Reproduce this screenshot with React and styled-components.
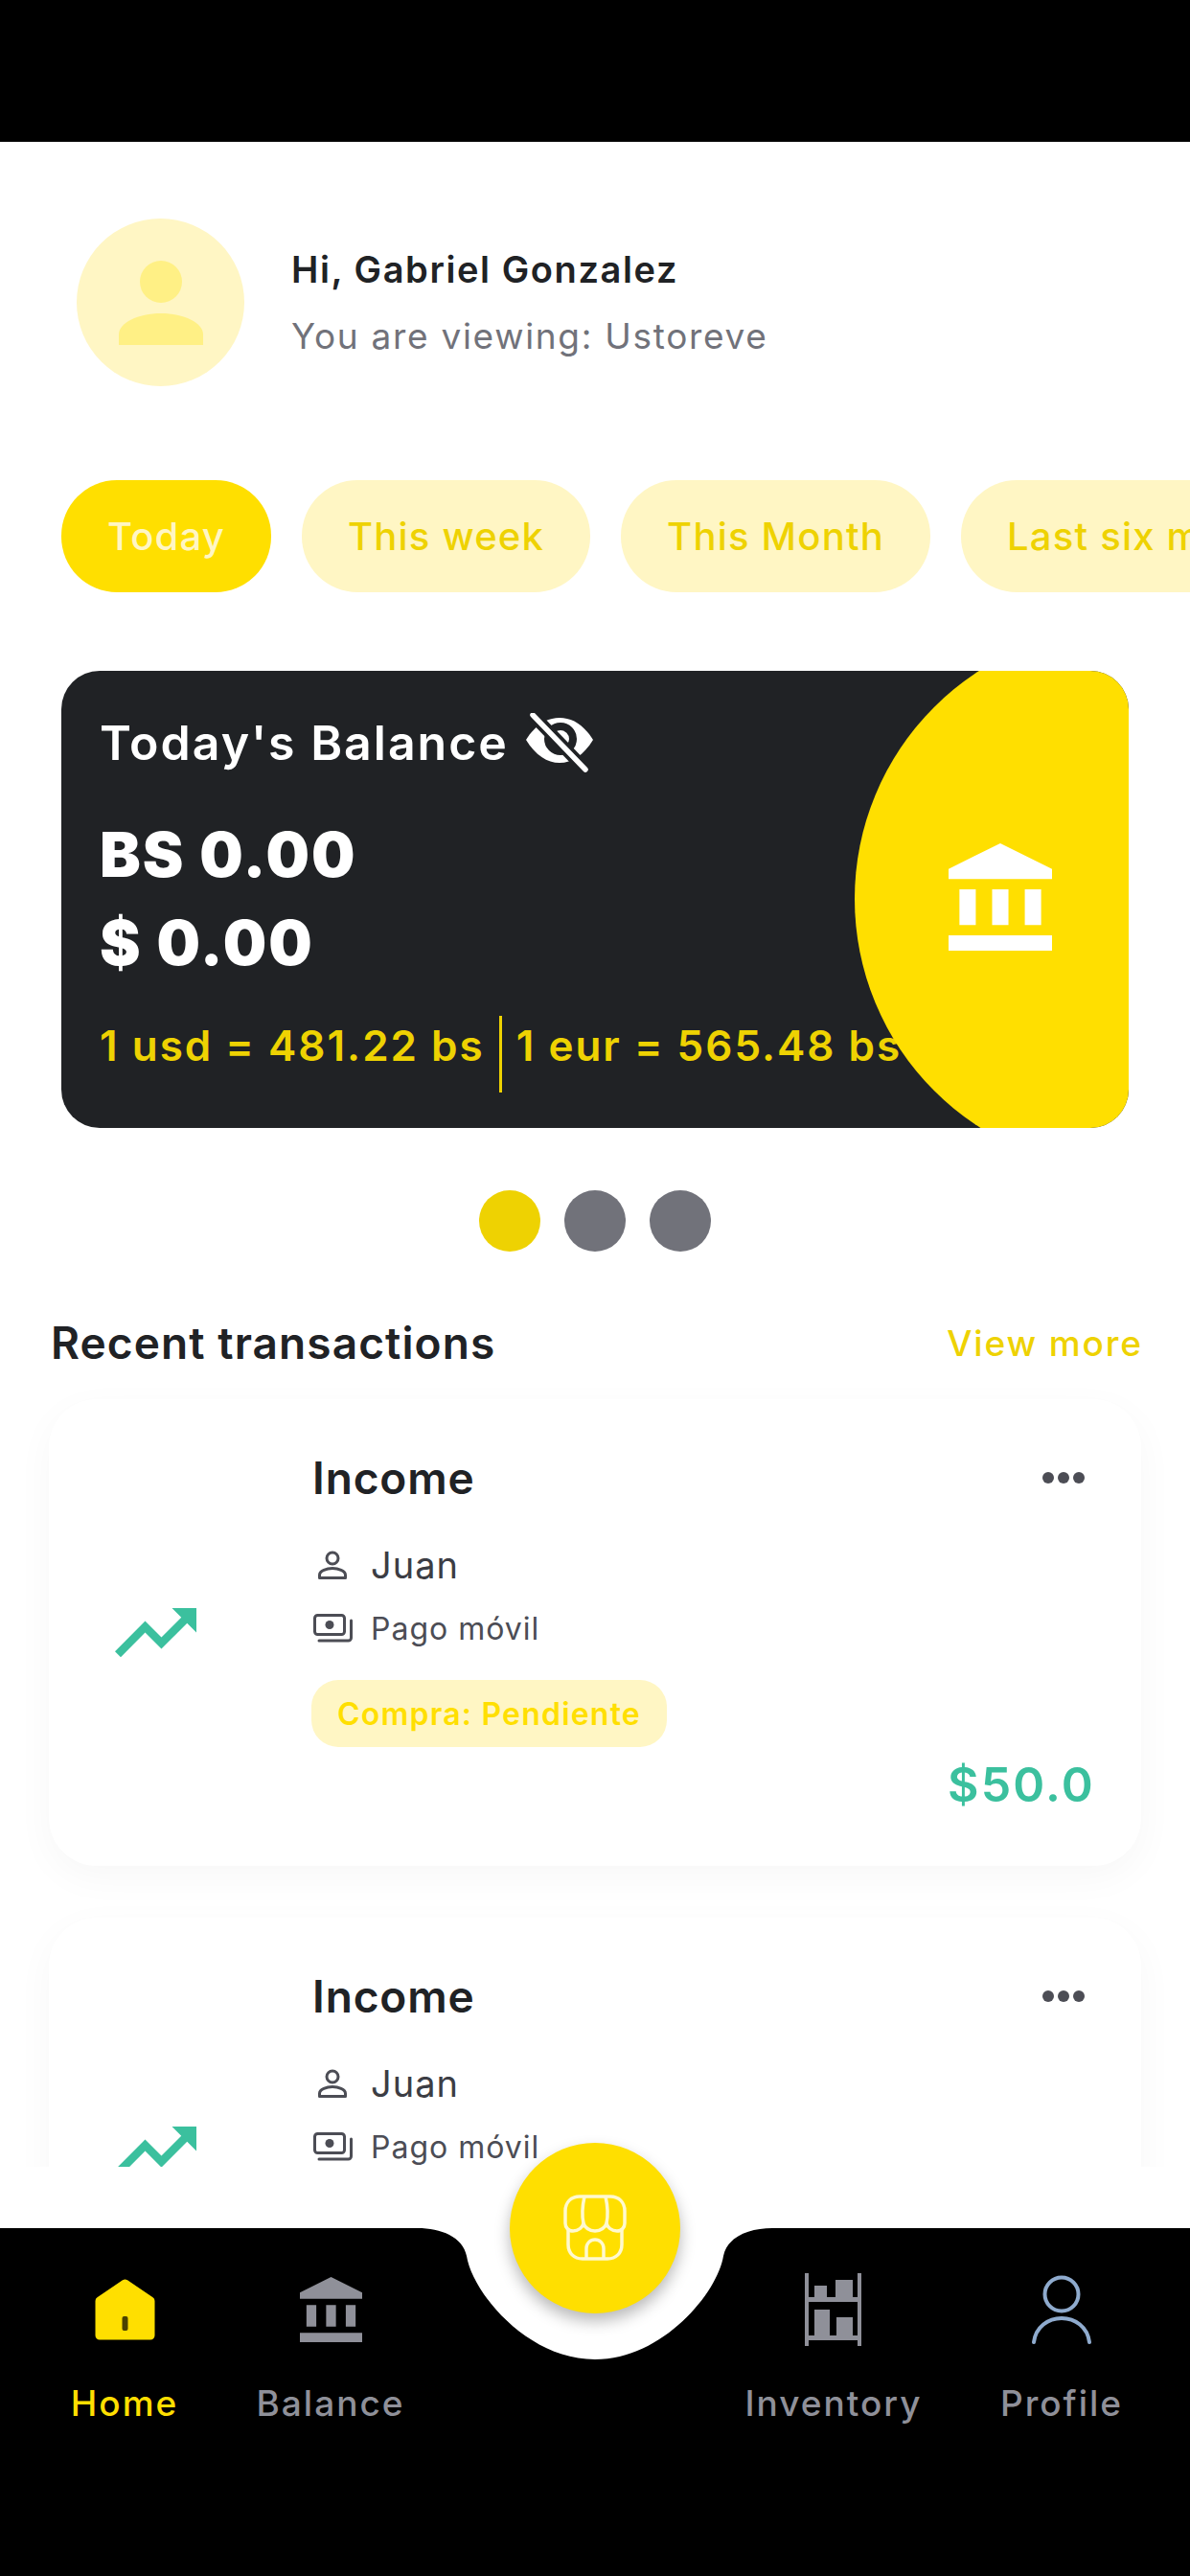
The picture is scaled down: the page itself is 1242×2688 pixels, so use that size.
import React from "react";
import styled, { createGlobalStyle } from "styled-components";

const Global = createGlobalStyle`
  html, body { margin: 0; padding: 0; background: #fff; }
  * { box-sizing: border-box; }
  body { font-family: Inter, "Liberation Sans", sans-serif; }
`;

const YELLOW = "#ffdf00";
const TEXT_YELLOW = "#eed202";
const PALE = "#fff6c4";
const DARK = "#202225";
const GREY = "#71727a";
const GREEN = "#3bc09e";
const NAV_GREY = "#8f9099";

const Screen = styled.div`
  width: 1242px;
  height: 2688px;
  display: flex;
  flex-direction: column;
  overflow: hidden;
  background: #fff;
`;

const StatusBar = styled.div`
  height: 148px;
  background: #000;
`;

const Main = styled.main`
  height: 2113px;
  overflow: hidden;
  padding-top: 80px;
`;

const Spacer = styled.div`
  height: 64px;
`;

const Greeting = styled.section`
  display: flex;
  align-items: center;
  gap: 49px;
  padding-left: 80px;
`;

const Avatar = styled.div`
  width: 175px;
  height: 175px;
  border-radius: 50%;
  background: ${PALE};
  display: flex;
  align-items: center;
  justify-content: center;
`;

const GreetingText = styled.div`
  display: flex;
  flex-direction: column;
  gap: 26px;
`;

const Name = styled.div`
  font-size: 38px;
  line-height: 44px;
  font-weight: 600;
  letter-spacing: 1.6px;
  color: ${DARK};
`;

const Viewing = styled.div`
  font-size: 37px;
  line-height: 44px;
  letter-spacing: 1.7px;
  color: ${GREY};
`;

const Chips = styled.div`
  display: flex;
  gap: 32px;
  padding-left: 64px;
  margin-top: 98px;
  white-space: nowrap;
`;

const Chip = styled.div`
  flex: none;
  height: 117px;
  padding: 0 48px;
  border-radius: 58px;
  display: flex;
  align-items: center;
  font-size: 40px;
  font-weight: 500;
  letter-spacing: 1.2px;
  color: ${(p) => (p.$active ? "#fff6c4" : TEXT_YELLOW)};
  background: ${(p) => (p.$active ? YELLOW : PALE)};
`;

const BalanceCard = styled.section`
  position: relative;
  width: 1114px;
  height: 477px;
  margin: 82px 0 0 64px;
  padding: 46px 40px 0;
  border-radius: 40px;
  background: ${DARK};
  overflow: hidden;
`;

const BalanceTitle = styled.div`
  display: flex;
  align-items: center;
  gap: 18px;
  margin-top: -2px;
  font-size: 50px;
  line-height: 60px;
  font-weight: 600;
  letter-spacing: 2px;
  color: #fff;
`;

const Amount = styled.div`
  margin-top: ${(p) => p.$top}px;
  font-size: 64px;
  line-height: 72px;
  font-weight: 900;
  letter-spacing: 2px;
  color: #fff;
`;

const Rates = styled.div`
  display: flex;
  align-items: center;
  margin-top: 31px;
  height: 80px;
  font-size: 44px;
  font-weight: 600;
  letter-spacing: 2px;
  color: ${TEXT_YELLOW};
  white-space: nowrap;
`;

const RateDivider = styled.span`
  width: 3px;
  height: 80px;
  margin: 18px 15px 0;
  background: ${TEXT_YELLOW};
`;

const BankDisc = styled.div`
  position: absolute;
  left: 828px;
  top: -45px;
  width: 566px;
  height: 566px;
  border-radius: 50%;
  background: ${YELLOW};
`;

const BankIconSlot = styled.div`
  position: absolute;
  left: 926px;
  top: 180px;
  line-height: 0;
`;

const Dots = styled.div`
  display: flex;
  justify-content: center;
  gap: 25px;
  margin-top: 65px;
`;

const Dot = styled.span`
  width: 64px;
  height: 64px;
  border-radius: 50%;
  background: ${(p) => (p.$active ? "#eed202" : GREY)};
`;

const SectionHead = styled.div`
  display: flex;
  align-items: center;
  justify-content: space-between;
  padding: 0 49px 0 53px;
  margin-top: 67px;
`;

const SectionTitle = styled.h2`
  margin: 0;
  font-size: 46px;
  line-height: 56px;
  font-weight: 600;
  letter-spacing: 1.1px;
  color: ${DARK};
`;

const ViewMore = styled.span`
  font-size: 37px;
  font-weight: 500;
  letter-spacing: 1.9px;
  color: ${TEXT_YELLOW};
`;

const TxList = styled.div`
  display: flex;
  flex-direction: column;
  gap: 54px;
  margin: 31px 51px 0;
`;

const TxCard = styled.article`
  flex: none;
  height: 487px;
  display: flex;
  align-items: center;
  background: #fff;
  border-radius: 50px;
  box-shadow: 0 12px 40px rgba(0, 0, 0, 0.035);
`;

const TxIconCol = styled.div`
  flex: none;
  width: 275px;
  padding-left: 69px;
  line-height: 0;
`;

const TxBody = styled.div`
  flex: 1;
  align-self: stretch;
  padding: 54px 48px 0 0;
  display: flex;
  flex-direction: column;
`;

const TxTop = styled.div`
  display: flex;
  align-items: center;
  justify-content: space-between;
  height: 56px;
`;

const TxTitle = styled.div`
  font-size: 46px;
  font-weight: 600;
  letter-spacing: 0.9px;
  color: ${DARK};
`;

const MoreDots = styled.div`
  display: flex;
  gap: 4px;
  margin-right: 11px;
  span {
    width: 12px;
    height: 12px;
    border-radius: 50%;
    background: #4c4d55;
  }
`;

const TxRow = styled.div`
  display: flex;
  align-items: center;
  height: 48px;
  margin-top: ${(p) => p.$top}px;
`;

const TxRowIcon = styled.div`
  width: 61px;
  padding-left: ${(p) => p.$pad}px;
  line-height: 0;
`;

const Customer = styled.span`
  font-size: 38px;
  letter-spacing: 1px;
  color: #3c3d44;
`;

const Method = styled.span`
  font-size: 32px;
  letter-spacing: 1px;
  color: #4c4d55;
`;

const Status = styled.div`
  align-self: flex-start;
  height: 70px;
  margin: 30px 0 0 -1px;
  padding: 0 27px;
  border-radius: 28px;
  display: flex;
  align-items: center;
  font-size: 32px;
  font-weight: 600;
  letter-spacing: 1.2px;
  color: ${YELLOW};
  background: ${PALE};
`;

const TxAmount = styled.div`
  align-self: flex-end;
  margin-top: 9px;
  font-size: 50px;
  line-height: 60px;
  font-weight: 600;
  letter-spacing: 2.2px;
  color: ${GREEN};
`;

const Nav = styled.nav`
  position: relative;
  flex: 1;
  background: #000;
  display: flex;
  padding-top: 47px;
`;

const Notch = styled.svg`
  position: absolute;
  left: 400px;
  top: -1px;
`;

const Fab = styled.div`
  position: absolute;
  left: 532px;
  top: -89px;
  width: 178px;
  height: 178px;
  border-radius: 50%;
  background: ${YELLOW};
  box-shadow: 0 8px 16px rgba(0, 0, 0, 0.28);
  display: flex;
  align-items: center;
  justify-content: center;
`;

const NavItem = styled.div`
  position: relative;
  width: ${(p) => p.$w}px;
  margin-left: ${(p) => p.$left}px;
  display: flex;
  flex-direction: column;
  align-items: center;
`;

const NavIconSlot = styled.div`
  height: 76px;
  display: flex;
  align-items: center;
  justify-content: center;
`;

const NavLabel = styled.span`
  margin-top: 38px;
  font-size: 37px;
  line-height: 44px;
  font-weight: 500;
  letter-spacing: 2px;
  white-space: nowrap;
  color: ${(p) => (p.$active ? YELLOW : NAV_GREY)};
`;

const BankIcon = ({ width, height, color }) => (
  <svg width={width} height={height} viewBox="2 1 19 21" preserveAspectRatio="none" fill={color}>
    <path d="M4 10v7h3v-7H4zm6 0v7h3v-7h-3zM2 22h19v-3H2v3zm14-12v7h3v-7h-3zM11.5 1 2 6v2h19V6l-9.5-5z" />
  </svg>
);

const EyeOff = () => (
  <svg width="70" height="62" viewBox="0 0 70 62" fill="none">
    <path d="M0 28C10 12 22 5 35 5s25 7 35 23C60 44 48 52 35 52S10 44 0 28z" fill="#fff" />
    <circle cx="36" cy="27" r="13" stroke={DARK} strokeWidth="8" fill="#fff" />
    <path d="M7 2l55 57" stroke={DARK} strokeWidth="13" />
    <path d="M7 2l55 57" stroke="#fff" strokeWidth="5.500" strokeLinecap="round" />
  </svg>
);

const TrendUp = () => (
  <svg width="85" height="52" viewBox="2 6 20 12.2" preserveAspectRatio="none" fill={GREEN}>
    <path d="M16 6l2.29 2.29-4.88 4.88-4-4L2 16.59 3.41 18l6-6 4 4 6.3-6.29L22 12V6z" />
  </svg>
);

const PersonSmall = () => (
  <svg width="30" height="30" viewBox="0 0 30 30" fill="none" stroke="#4c4d55" strokeWidth="3">
    <circle cx="15" cy="8" r="6" />
    <path d="M1.5 28.5v-3C1.5 21 9 18.500 15 18.500S28.500 21 28.500 25.500v3z" strokeLinejoin="round" />
  </svg>
);

const MoneyStack = () => (
  <svg width="41" height="30" viewBox="0 0 41 30" fill="none" stroke="#4c4d55" strokeWidth="3">
    <rect x="1.500" y="1.500" width="31" height="20" rx="3" />
    <circle cx="17" cy="11.500" r="4.500" fill="#4c4d55" stroke="none" />
    <path d="M39.500 7v18a3 3 0 0 1-3 3H6" strokeLinecap="round" />
  </svg>
);

const AvatarPerson = () => (
  <svg width="88" height="88" viewBox="0 0 88 88" fill="#fff085">
    <circle cx="44" cy="22" r="22" />
    <path d="M0 88v-11C0 65 20 55 44 55s44 10 44 22v11z" />
  </svg>
);

const HomeIcon = () => (
  <svg width="65" height="65" viewBox="0 0 65 65">
    <path d="M32.500 5 59 23v36H6V23z" fill={YELLOW} stroke={YELLOW} strokeWidth="9" strokeLinejoin="round" />
    <rect x="29.500" y="39" width="6" height="15" rx="2" fill="#4a4100" />
  </svg>
);

const ShelfIcon = () => (
  <svg width="62" height="76" viewBox="0 0 62 76" fill={NAV_GREY}>
    <rect x="1" y="0" width="4" height="76" />
    <rect x="56" y="0" width="4" height="76" />
    <rect x="1" y="25" width="59" height="5" />
    <rect x="1" y="65" width="59" height="5" />
    <rect x="11" y="13" width="13" height="12" />
    <rect x="33" y="7" width="18" height="18" />
    <rect x="11" y="38" width="16" height="27" />
    <rect x="34" y="46" width="17" height="19" />
  </svg>
);

const ProfileIcon = () => (
  <svg width="64" height="72" viewBox="0 0 64 72" fill="none" stroke="#8fabce" strokeWidth="4">
    <circle cx="32" cy="20" r="17.500" />
    <path d="M3 70C5 54 18 45 32 45s27 9 29 25" strokeLinecap="round" />
  </svg>
);

const StoreIcon = () => (
  <svg width="68" height="70" viewBox="0 0 68 70" fill="none" stroke="#fff9cf" strokeWidth="3.500" strokeLinejoin="round">
    <path d="M18 2h32c9 0 15 6 15 15v13c0 4-3 8-8 8-6 0-10-4-11-8-1 4-6 8-12 8s-11-4-12-8c-1 4-5 8-11 8-5 0-8-4-8-8V17C3 8 9 2 18 2z" />
    <path d="M23 2c-2 9-3 19-1 28M45 2c2 9 3 19 1 28" />
    <path d="M6 37v15c0 9 6 15 15 15h26c9 0 15-6 15-15V37" />
    <path d="M25 67V56c0-5 4-9 9-9s9 4 9 9v11" />
  </svg>
);

const Transaction = () => (
  <TxCard>
    <TxIconCol>
      <TrendUp />
    </TxIconCol>
    <TxBody>
      <TxTop>
        <TxTitle>Income</TxTitle>
        <MoreDots>
          <span />
          <span />
          <span />
        </MoreDots>
      </TxTop>
      <TxRow $top={39}>
        <TxRowIcon $pad={6}>
          <PersonSmall />
        </TxRowIcon>
        <Customer>Juan</Customer>
      </TxRow>
      <TxRow $top={18}>
        <TxRowIcon $pad={1}>
          <MoneyStack />
        </TxRowIcon>
        <Method>Pago móvil</Method>
      </TxRow>
      <Status>Compra: Pendiente</Status>
      <TxAmount>$50.0</TxAmount>
    </TxBody>
  </TxCard>
);

export default function App() {
  return (
    <Screen>
      <Global />
      <StatusBar />
      <Main>
        <Greeting>
          <Avatar>
            <AvatarPerson />
          </Avatar>
          <GreetingText>
            <Name>Hi, Gabriel Gonzalez</Name>
            <Viewing>You are viewing: Ustoreve</Viewing>
          </GreetingText>
        </Greeting>
        <Chips>
          <Chip $active>Today</Chip>
          <Chip>This week</Chip>
          <Chip>This Month</Chip>
          <Chip>Last six months</Chip>
        </Chips>
        <BalanceCard>
          <BalanceTitle>
            Today's Balance
            <EyeOff />
          </BalanceTitle>
          <Amount $top={50}>BS 0.00</Amount>
          <Amount $top={20}>$ 0.00</Amount>
          <Rates>
            1 usd = 481.22 bs
            <RateDivider />
            1 eur = 565.48 bs
          </Rates>
          <BankDisc />
          <BankIconSlot>
            <BankIcon width={108} height={112} color="#fff" />
          </BankIconSlot>
        </BalanceCard>
        <Dots>
          <Dot $active />
          <Dot />
          <Dot />
        </Dots>
        <SectionHead>
          <SectionTitle>Recent transactions</SectionTitle>
          <ViewMore>View more</ViewMore>
        </SectionHead>
        <TxList>
          <Transaction />
          <Transaction />
        </TxList>
      </Main>
      <Spacer />
      <Nav>
        <Notch width="442" height="140" viewBox="0 0 442 140" fill="#fff">
          <path d="M0 0h442v1h-36C382 1 359 10 355 30 349 68 292 138 221 138 150 138 93 68 87 30 83 10 60 1 36 1H0z" />
        </Notch>
        <Fab>
          <StoreIcon />
        </Fab>
        <NavItem $w={130} $left={65}>
          <NavIconSlot>
            <HomeIcon />
          </NavIconSlot>
          <NavLabel $active>Home</NavLabel>
        </NavItem>
        <NavItem $w={150} $left={75}>
          <NavIconSlot>
            <BankIcon width={65} height={68} color={NAV_GREY} />
          </NavIconSlot>
          <NavLabel>Balance</NavLabel>
        </NavItem>
        <NavItem $w={180} $left={360}>
          <NavIconSlot>
            <ShelfIcon />
          </NavIconSlot>
          <NavLabel>Inventory</NavLabel>
        </NavItem>
        <NavItem $w={122} $left={87}>
          <NavIconSlot>
            <ProfileIcon />
          </NavIconSlot>
          <NavLabel>Profile</NavLabel>
        </NavItem>
      </Nav>
    </Screen>
  );
}
